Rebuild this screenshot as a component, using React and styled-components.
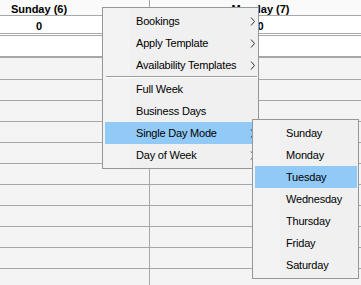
import React from "react";
import styled, { createGlobalStyle } from "styled-components";

const Global = createGlobalStyle`
  html, body { margin: 0; padding: 0; }
  body {
    background: #f4f4f4;
    font-family: "Liberation Sans", Arial, sans-serif;
    font-size: 11px;
    color: #000;
  }
`;

const LINE = "#a7a7a7";

const Viewport = styled.div`
  position: relative;
  width: 361px;
  height: 285px;
  overflow: hidden;
  background: #f4f4f4;
`;

const Table = styled.div`
  display: flex;
  flex-direction: column;
  width: 443px;
  margin-left: -71px;
`;

const Row = styled.div`
  display: grid;
  grid-template-columns: 221px 222px;
  height: ${(p) => p.$h}px;
  background: ${(p) => p.$bg || "transparent"};
  border-bottom: ${(p) => p.$border || `1px solid ${LINE}`};
`;

const Cell = styled.div`
  border-right: 1px solid ${LINE};
  display: flex;
  align-items: center;
  justify-content: center;
  font-weight: ${(p) => (p.$bold ? 700 : 400)};
  padding-top: ${(p) => p.$pt || 0}px;
  box-sizing: border-box;
`;

const Menu = styled.div`
  position: absolute;
  left: ${(p) => p.$x}px;
  top: ${(p) => p.$y}px;
  width: ${(p) => p.$w}px;
  box-sizing: border-box;
  border: 1px solid #979797;
  padding: 2px 1px 2px 2px;
  background: linear-gradient(to right, #f3f3f3 0, #f3f3f3 27px, #f0f0f0 27px);
  display: flex;
  flex-direction: column;
  z-index: ${(p) => p.$z || 1};
`;

const Item = styled.div`
  height: 22px;
  display: flex;
  align-items: center;
  padding-left: ${(p) => p.$indent}px;
  padding-right: 1px;
  background: ${(p) => (p.$active ? "#91c9f7" : "transparent")};
  color: #000;
  font-size: 11px;
  letter-spacing: -0.2px;
  white-space: nowrap;
`;

const Label = styled.span`
  flex: 1;
`;

const Separator = styled.div`
  height: 2px;
  border-top: 1px solid #a0a0a0;
  background: #fff;
  box-sizing: border-box;
  margin-left: 1px;
`;

const Chevron = () => (
  <svg width="6" height="9" viewBox="0 0 6 9" style={{ display: "block" }}>
    <path d="M1 0.5 L4.5 4.5 L1 8.5" fill="none" stroke="#333" strokeWidth="1" />
  </svg>
);

const mainItems = [
  { label: "Bookings", sub: true },
  { label: "Apply Template", sub: true },
  { label: "Availability Templates", sub: true },
  { sep: true },
  { label: "Full Week" },
  { label: "Business Days" },
  { label: "Single Day Mode", sub: true, active: true },
  { label: "Day of Week", sub: true },
];

const days = ["Sunday", "Monday", "Tuesday", "Wednesday", "Thursday", "Friday", "Saturday"];

export default function App() {
  const slots = Array.from({ length: 11 });
  return (
    <Viewport>
      <Global />
      <Table>
        <Row $h={15} $bg="#fafafa">
          <Cell $bold $pt={2}>Sunday (6)</Cell>
          <Cell $bold $pt={2}>Monday (7)</Cell>
        </Row>
        <Row $h={17} $bg="#fff" $border={`3px double ${LINE}`}>
          <Cell $bold $pt={2}>0</Cell>
          <Cell $bold $pt={2}>0</Cell>
        </Row>
        <Row $h={20} $bg="#fff" $border={`2px solid ${LINE}`}>
          <Cell />
          <Cell />
        </Row>
        {slots.map((_, i) => (
          <Row key={i} $h={i === 0 ? 21 : 20}>
            <Cell />
            <Cell />
          </Row>
        ))}
      </Table>

      <Menu $x={102} $y={7} $w={157}>
        {mainItems.map((it, i) =>
          it.sep ? (
            <Separator key={i} />
          ) : (
            <Item key={i} $indent={31} $active={it.active}>
              <Label>{it.label}</Label>
              {it.sub && <Chevron />}
            </Item>
          )
        )}
      </Menu>

      <Menu $x={252} $y={119} $w={107} $z={2}>
        {days.map((d) => (
          <Item key={d} $indent={31} $active={d === "Tuesday"}>
            <Label>{d}</Label>
          </Item>
        ))}
      </Menu>
    </Viewport>
  );
}
